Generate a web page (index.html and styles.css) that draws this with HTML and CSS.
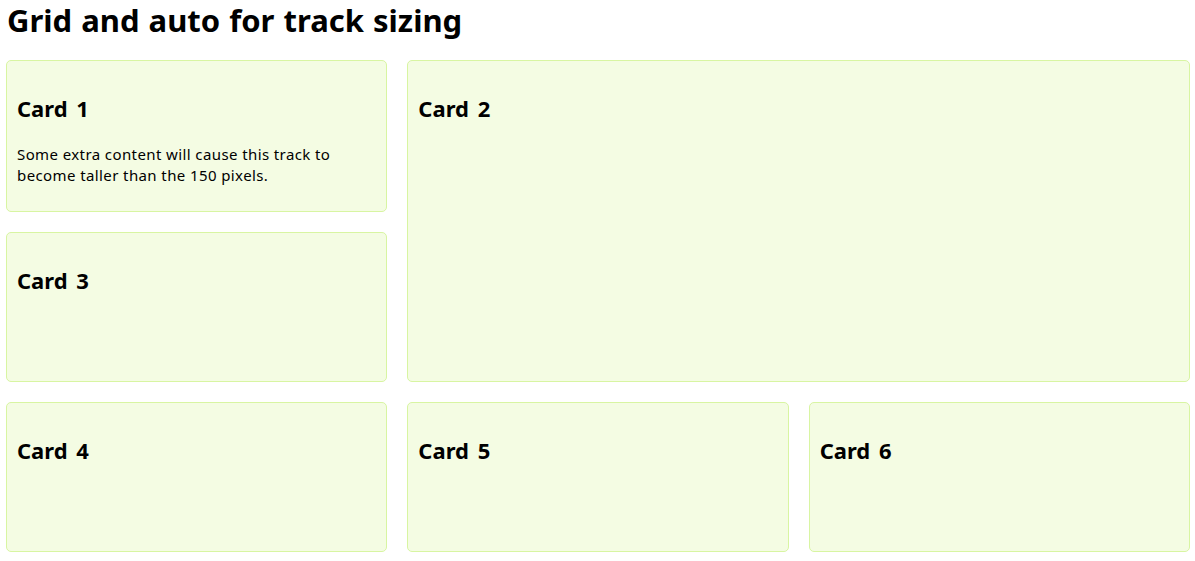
FILE: index.html
```html
<!DOCTYPE html>
<html>
<head>
<meta charset="utf-8">
<link rel="stylesheet" href="styles.css">
</head>
<body>
<h1 class="title">Grid and auto for track sizing</h1>
<div class="grid">
  <div class="card card1">
    <h2 class="card-title">Card 1</h2>
    <p class="card-text">Some extra content will cause this track to become taller than the 150 pixels.</p>
  </div>
  <div class="card card2">
    <h2 class="card-title">Card 2</h2>
  </div>
  <div class="card card3">
    <h2 class="card-title">Card 3</h2>
  </div>
  <div class="card">
    <h2 class="card-title">Card 4</h2>
  </div>
  <div class="card">
    <h2 class="card-title">Card 5</h2>
  </div>
  <div class="card">
    <h2 class="card-title">Card 6</h2>
  </div>
</div>
</body>
</html>
```
FILE: styles.css
```css
html, body {
  margin: 0;
  padding: 0;
  background: #fff;
}
body {
  padding: 0 5px 0 6px;
  font-family: "Noto Sans", "Open Sans", sans-serif;
  color: #000;
}
.title {
  margin: 0 0 0 1px;
  font-size: 31px;
  line-height: 40px;
  font-weight: 700;
  height: 60px;
  word-spacing: 1px;
}
.grid {
  display: grid;
  grid-template-columns: repeat(3, 1fr);
  grid-template-rows: minmax(150px, auto) 150px 150px;
  gap: 20px;
}
.card {
  background: #f4fce3;
  border: 1px solid #d8f5a2;
  border-radius: 5px;
  padding: 10px;
  box-sizing: border-box;
}
.card2 {
  grid-column: 2 / 4;
  grid-row: 1 / 3;
}
.card-title {
  margin: 7px 0 0 0;
  font-size: 22px;
  line-height: 60px;
  height: 60px;
  font-weight: 700;
  word-spacing: 3px;
}
.card-text {
  margin: 6px 0 15px 0;
  font-size: 15px;
  line-height: 21px;
  letter-spacing: 0.4px;
}
```
